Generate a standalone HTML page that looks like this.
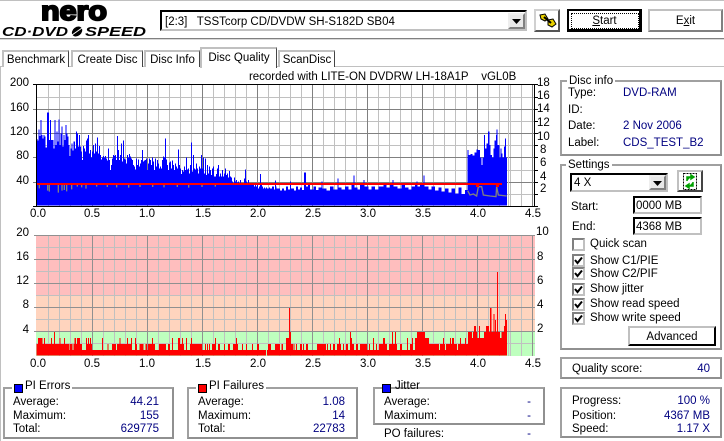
<!DOCTYPE html>
<html><head><meta charset="utf-8"><style>
html,body{margin:0;padding:0;background:#fff}
body{width:724px;height:441px;position:relative;overflow:hidden;font:11.5px "Liberation Sans",sans-serif;color:#000}
.t{position:absolute;white-space:nowrap;line-height:14px;height:14px;margin-top:1px}
.n{color:#000080}
.box{position:absolute;border:2px solid;border-color:#a0a0a0 #909090 #909090 #a0a0a0;box-sizing:border-box}
.lg{background:#fff;padding:0 2px}
.sq{position:absolute;width:7px;height:7px;border:1px solid #000;box-sizing:content-box}
.ck{position:absolute;left:572px;width:9px;height:9px;border:2px solid;border-color:#808080 #c0c0c0 #c0c0c0 #808080;background:#fff}
.ck svg{position:absolute;left:0;top:0}
.sunk{position:absolute;box-sizing:border-box;border:2px solid;border-color:#000 #c0c0c0 #c0c0c0 #000;background:#fff}
.btn{position:absolute;box-sizing:border-box;border:2px solid;border-color:#d0d0d0 #000 #000 #d0d0d0;background:#fff;text-align:center}
.tab{position:absolute;box-sizing:border-box;top:50px;height:17px;border:2px solid #c0c0c0;border-bottom:0;border-right:1px solid #444;text-align:center;line-height:17px;background:#fff}
.u{text-decoration:underline}
</style></head><body>

<div style="position:absolute;left:0;top:0;width:724px;height:1px;background:#c0c0c0"></div>
<div style="position:absolute;left:0;top:38px;width:724px;height:1px;background:#808080"></div>
<div style="position:absolute;left:0;top:39px;width:724px;height:1px;background:#d8d8d8"></div>
<div style="position:absolute;left:0;top:66px;width:724px;height:1px;background:#c0c0c0"></div>
<div style="position:absolute;left:0;top:66px;width:1px;height:375px;background:#c0c0c0"></div>

<svg style="position:absolute;left:0;top:0" width="160" height="38">
<text x="41" y="20" font-family="Liberation Sans" font-weight="bold" font-size="27" textLength="66" lengthAdjust="spacingAndGlyphs" stroke="#000" stroke-width="2">nero</text>
<text x="2" y="36" font-family="Liberation Sans" font-weight="bold" font-style="italic" font-size="12.5" textLength="66" lengthAdjust="spacingAndGlyphs">CD·DVD</text>
<ellipse cx="77" cy="31.5" rx="5" ry="5" fill="#000" transform="skewX(-15) translate(8.500,0)"/>
<path d="M72 35L82 28" stroke="#fff" stroke-width="1"/>
<text x="85" y="36" font-family="Liberation Sans" font-weight="bold" font-style="italic" font-size="12.5" textLength="61" lengthAdjust="spacingAndGlyphs">SPEED</text>
</svg>

<div class="sunk" style="left:160px;top:10px;width:367px;height:21px"></div>
<div class="t" style="left:165px;top:14px">[2:3]&nbsp;&nbsp; TSSTcorp CD/DVDW SH-S182D SB04</div>
<div class="btn" style="left:508px;top:13px;width:17px;height:16px;border-color:#eee #808080 #808080 #eee;background:#e8e8e8"></div>
<svg style="position:absolute;left:512px;top:19px" width="9" height="5"><path d="M0 0H9L4.500 5Z" fill="#000"/></svg>

<div class="btn" style="left:534px;top:9px;width:26px;height:23px;border-color:#d0d0d0 #555 #555 #d0d0d0"></div>
<svg style="position:absolute;left:538px;top:12px" width="20" height="17">
<path d="M2 3L7 2L10 7L7 9L3 7ZM10 8L15 7L18 12L14 15L10 13Z" fill="#e8d000" stroke="#000" stroke-width="1"/>
<path d="M6 5L13 11" stroke="#000" stroke-width="2"/></svg>

<div class="btn" style="left:567px;top:9px;width:75px;height:23px;border:2px solid #000;border-right-width:3px;border-bottom-width:3px"></div>
<div style="position:absolute;left:571px;top:13px;width:66px;height:14px;border:1px dotted #000"></div>
<div class="t" style="left:567px;top:13px;width:75px;text-align:center"><span class="u">S</span>tart</div>
<div class="btn" style="left:648px;top:9px;width:75px;height:23px;border-color:#c0c0c0 #808080 #808080 #c0c0c0"></div>
<div class="t" style="left:648px;top:13px;width:75px;text-align:center">E<span class="u">x</span>it</div>

<div class="tab" style="left:2px;width:67px">Benchmark</div>
<div class="tab" style="left:71px;width:72px">Create Disc</div>
<div class="tab" style="left:144px;width:56px">Disc Info</div>
<div class="tab" style="left:278px;width:57px">ScanDisc</div>
<div class="tab" style="left:200px;top:47px;width:77px;height:21px;border-bottom:0;line-height:18px;z-index:2">Disc Quality</div>

<div class="t" style="left:249px;top:69px;width:270px;letter-spacing:-.02px">recorded with LITE-ON DVDRW LH-18A1P&nbsp;&nbsp;&nbsp; vGL0B</div>

<svg style="position:absolute;left:0;top:0" width="724" height="441" shape-rendering="crispEdges">
<!-- top chart grid -->
<path d="M36 97.500H535M36 121.500H535M36 145.500H535M36 170.500H535M36 194.500H535M48.500 84V206M59.500 84V206M70.500 84V206M81.500 84V206M103.500 84V206M114.500 84V206M125.500 84V206M136.500 84V206M158.500 84V206M169.500 84V206M180.500 84V206M191.500 84V206M213.500 84V206M224.500 84V206M235.500 84V206M246.500 84V206M268.500 84V206M279.500 84V206M290.500 84V206M301.500 84V206M323.500 84V206M334.500 84V206M345.500 84V206M356.500 84V206M378.500 84V206M389.500 84V206M400.500 84V206M411.500 84V206M433.500 84V206M444.500 84V206M455.500 84V206M466.500 84V206M488.500 84V206M499.500 84V206M510.500 84V206M521.500 84V206" stroke="#c0c0c0" fill="none"/>
<path d="M33 109.500H538M33 133.500H538M33 157.500H538M33 182.500H538M92.500 84V206M147.500 84V206M202.500 84V206M257.500 84V206M312.500 84V206M367.500 84V206M422.500 84V206M477.500 84V206M532.500 84V206" stroke="#808080" fill="none"/>
<!-- top chart bars -->
<g transform="translate(0,70) scale(.33333)" fill="#0000ff">
<path d="M110 407V207H113V212H116V178H119V198H122V150H125V195H128V205H131V195H134V200H137V232H141V128H147V210H150V150H153V210H161V235H164V150H167V225H170V185H173V215H176V148H179V225H182V190H185V170H188V230H191V195H194V210H197V165H200V190H203V200H206V225H209V258H212V235H215V220H218V242H221V215H225V235H228V184H231V190H234V230H237V195H240V230H243V245H246V270H249V228H252V235H255V245H258V212H261V205H264V195H267V250H270V240H273V262H276V245H279V225H282V250H285V220H288V245H291V202H294V250H297V228H300V255H303V268H306V262H309V258H312V262H315V258H318V265H321V272H324V235H327V270H330V300H333V285H336V265H339V255H342V258H345V255H348V270H351V198H354V240H357V270H360V255H363V220H366V275H369V212H372V265H375V268H378V280H381V255H384V262H387V252H390V260H393V265H396V270H399V285H402V290H405V298H408V265H411V285H414V268H417V290H420V280H423V270H426V240H429V275H432V272H435V270H438V265H441V300H444V280H447V265H450V270H453V285H456V262H459V275H462V300H465V265H468V290H471V270H474V280H477V295H480V290H483V295H486V270H489V260H492V262H495V205H498V268H501V285H504V300H507V278H510V275H513V295H516V272H519V285H522V300H525V280H528V290H531V295H534V238H537V285H540V295H543V312H546V300H549V305H552V290H555V300H558V262H561V298H564V295H567V310H570V285H573V218H576V305H579V255H582V295H585V298H588V280H591V295H594V310H597V290H600V295H603V255H606V295H609V262H612V310H615V265H618V315H621V285H624V310H627V290H630V300H633V315H636V295H639V290H642V320H648V312H651V295H654V285H657V320H660V310H663V320H666V300H669V320H672V310H675V295H678V315H681V310H684V322H687V303H690V320H693V322H696V335H699V345H702V322H705V335H708V330H711V338H714V335H717V340H720V330H723V345H726V340H729V345H732V325H735V298H738V335H741V345H744V330H747V345H762V350H765V345H768V350H771V345H774V355H777V350H780V312H783V345H786V350H789V355H792V352H795V355H798V352H801V356H807V352H810V356H816V350H822V358H825V332H828V350H830V355H840V407Z"/>
</g>
<g transform="translate(280,70) scale(.33333)" fill="#0000ff">
<path d="M0 407V362H6V355H12V362H18V350H24V358H30V335H33V355H42V362H48V350H54V358H60V352H66V360H72V308H78V350H84V345H90V358H100V350H108V360H116V352H125V335H128V355H140V362H150V350H160V358H172V325H175V352H185V358H195V350H205V358H215V345H220V317H223V352H232V358H240V345H250V330H253V350H265V358H275V350H285V358H295V350H310V345H320V352H330V345H337V330H340V350H352V355H365V345H375V352H385V358H395V350H405V345H410V335H413V350H420V345H430V317H433V350H445V358H455V350H465V362H475V352H485V365H495V355H505V368H515V355H525V370H535V352H545V372H555V360H563V240H566V255H572V252H578V256H584V248H590V238H594V240H600V262H604V285H608V262H612V195H615V235H620V220H624V185H628V225H632V255H636V262H640V235H644V212H648V195H650V178H653V225H658V262H661V235H664V250H668V262H672V230H675V205H678V262H681V407Z"/>
</g>
<path d="M508.500 84V206" stroke="#c0c0c0"/>
<!-- jitter + speed lines -->
<g transform="translate(0,70) scale(.33333)" fill="none" shape-rendering="auto">
<path d="M118 345V355M143 345V362M148 345V365M175 345V368M186 345V362M193 345V360M200 345V364M215 345V358M232 345V350M245 345V352M258 345V356M290 345V350M322 345V351M350 345V352M386 345V353M420 345V351M458 345V351M492 345V352M532 345V351M566 345V353M606 345V351M646 345V350" stroke="#808080" stroke-width="4"/>
</g>
<g transform="translate(280,70) scale(.33333)" fill="none" shape-rendering="auto">
<path d="M563 362L570 375L580 372L590 378L595 350L605 350L610 375L630 378L648 380L650 350L655 375L680 378" stroke="#808080" stroke-width="4"/>
</g>
<rect x="37" y="183" width="465" height="2" fill="#ff0000"/>
<path d="M476 185h3v2h-3zM496 185h3v2h-3z" fill="#ff0000"/>
<path d="M36.500 84V206M36 84.500H535M36 206.500H535M534.500 84V206" stroke="#000" fill="none"/>
<path d="M33 84.500H36M33 206.500H36M535 84.500H538M535 97.500H538M535 109.500H538M535 121.500H538M535 133.500H538M535 145.500H538M535 157.500H538M535 170.500H538M535 182.500H538M535 194.500H538M535 206.500H538" stroke="#000" fill="none"/>

<!-- bottom chart -->
<rect x="36" y="235" width="499" height="60" fill="#ffbebe"/>
<rect x="36" y="295" width="499" height="37" fill="#ffd4be"/>
<rect x="36" y="332" width="499" height="24" fill="#beffbe"/>
<path d="M36 247.500H535M36 271.500H535M36 295.500H535M36 319.500H535M36 343.500H535M48.500 235V356M59.500 235V356M70.500 235V356M81.500 235V356M103.500 235V356M114.500 235V356M125.500 235V356M136.500 235V356M158.500 235V356M169.500 235V356M180.500 235V356M191.500 235V356M213.500 235V356M224.500 235V356M235.500 235V356M246.500 235V356M268.500 235V356M279.500 235V356M290.500 235V356M301.500 235V356M323.500 235V356M334.500 235V356M345.500 235V356M356.500 235V356M378.500 235V356M389.500 235V356M400.500 235V356M411.500 235V356M433.500 235V356M444.500 235V356M455.500 235V356M466.500 235V356M488.500 235V356M499.500 235V356M508.500 235V356M510.500 235V356M521.500 235V356" stroke="#c0c0c0" fill="none"/>
<path d="M34 235.500H535M34 259.500H535M34 283.500H535M34 307.500H535M34 331.500H535M92.500 235V356M147.500 235V356M202.500 235V356M257.500 235V356M312.500 235V356M367.500 235V356M422.500 235V356M477.500 235V356M532.500 235V356" stroke="#909090" fill="none"/>
<g transform="translate(0,225) scale(.33333)" fill="#ff0000">
<path d="M110 392V357H114V339H127V357H132V339H135V357H153V339H156V357H162V321H165V357H178V339H181V357H192V339H195V357H207V375H209V357H218V375H220V357H224V339H228V357H231V339H240V357H246V375H258V339H261V357H264V339H267V357H270V339H273V357H276V375H306V339H309V375H322V357H325V375H336V357H348V375H351V357H358V339H361V357H381V339H384V357H393V339H396V375H405V339H408V357H411V375H418V357H430V375H436V357H441V375H444V357H456V339H459V357H465V375H477V357H498V375H504V357H510V375H516V339H519V375H534V339H540V357H546V339H549V357H552V375H558V339H561V375H570V357H573V339H576V357H606V375H615V357H618V375H621V357H624V375H627V357H630V375H636V357H645V339H648V375H654V357H660V375H672V357H675V375H684V357H690V375H699V357H708V339H711V357H714V375H726V357H729V375H738V357H741V375H756V357H759V375H771V357H777V375H798V392H801V375H804V357H813V375H825V357H840V392Z"/>
</g>
<g transform="translate(280,225) scale(.33333)" fill="#ff0000">
<path d="M0 392V375H5V357H9V375H18V339H27V249H30V321H33V357H39V375H40V357H44V375H48V357H51V375H60V357H66V375H69V357H72V375H78V357H84V375H111V357H138V375H141V357H144V375H150V357H153V375H159V357H165V375H171V357H177V339H180V357H183V375H189V357H192V375H198V357H204V375H210V321H213V339H216V357H222V375H228V357H234V375H240V357H261V375H267V357H270V375H279V339H282V375H288V357H291V375H297V357H309V339H315V357H321V375H327V357H336V321H339V357H345V321H348V357H351V375H360V357H366V375H381V339H384V375H390V357H396V339H399V375H405V339H411V321H435V339H441V339H447V357H477V375H480V357H489V339H492V357H495V375H498V357H510V339H513V357H516V339H522V357H531V375H534V357H540V339H543V357H555V339H558V357H564V321H576V339H579V321H582V303H588V321H591V339H597V303H600V339H612V321H618V303H627V321H630V249H634V321H640V267H643V321H645V285H648V321H651V141H654V321H660V339H664V321H672V303H675V267H678V285H681V392Z"/>
</g>
</svg>

<!-- axis labels -->
<div class="t" style="right:695px;top:75px">200</div>
<div class="t" style="right:695px;top:100px">160</div>
<div class="t" style="right:695px;top:124px">120</div>
<div class="t" style="right:695px;top:148px">80</div>
<div class="t" style="right:695px;top:173px">40</div>
<div class="t" style="left:537px;top:75px">18</div>
<div class="t" style="left:537px;top:88px">16</div>
<div class="t" style="left:537px;top:101px">14</div>
<div class="t" style="left:537px;top:115px">12</div>
<div class="t" style="left:537px;top:129px">10</div>
<div class="t" style="left:540px;top:142px">8</div>
<div class="t" style="left:540px;top:155px">6</div>
<div class="t" style="left:540px;top:169px">4</div>
<div class="t" style="left:540px;top:181px">2</div>
<div class="t" style="left:30px;width:16px;text-align:center;top:206px">0.0</div>
<div class="t" style="left:84px;width:16px;text-align:center;top:206px">0.5</div>
<div class="t" style="left:139px;width:16px;text-align:center;top:206px">1.0</div>
<div class="t" style="left:195px;width:16px;text-align:center;top:206px">1.5</div>
<div class="t" style="left:250px;width:16px;text-align:center;top:206px">2.0</div>
<div class="t" style="left:305px;width:16px;text-align:center;top:206px">2.5</div>
<div class="t" style="left:360px;width:16px;text-align:center;top:206px">3.0</div>
<div class="t" style="left:415px;width:16px;text-align:center;top:206px">3.5</div>
<div class="t" style="left:470px;width:16px;text-align:center;top:206px">4.0</div>
<div class="t" style="left:525px;width:16px;text-align:center;top:206px">4.5</div>

<div class="t" style="right:695px;top:225px">20</div>
<div class="t" style="right:695px;top:249px">16</div>
<div class="t" style="right:695px;top:273px">12</div>
<div class="t" style="right:695px;top:297px">8</div>
<div class="t" style="right:695px;top:322px">4</div>
<div class="t" style="left:536px;top:224px">10</div>
<div class="t" style="left:537px;top:249px">8</div>
<div class="t" style="left:537px;top:273px">6</div>
<div class="t" style="left:537px;top:297px">4</div>
<div class="t" style="left:537px;top:321px">2</div>
<div class="t" style="left:30px;width:16px;text-align:center;top:356px">0.0</div>
<div class="t" style="left:84px;width:16px;text-align:center;top:356px">0.5</div>
<div class="t" style="left:139px;width:16px;text-align:center;top:356px">1.0</div>
<div class="t" style="left:195px;width:16px;text-align:center;top:356px">1.5</div>
<div class="t" style="left:250px;width:16px;text-align:center;top:356px">2.0</div>
<div class="t" style="left:305px;width:16px;text-align:center;top:356px">2.5</div>
<div class="t" style="left:360px;width:16px;text-align:center;top:356px">3.0</div>
<div class="t" style="left:415px;width:16px;text-align:center;top:356px">3.5</div>
<div class="t" style="left:470px;width:16px;text-align:center;top:356px">4.0</div>
<div class="t" style="left:525px;width:16px;text-align:center;top:356px">4.5</div>

<!-- Disc info -->
<div class="box" style="left:560px;top:80px;width:162px;height:76px"></div>
<div class="t lg" style="left:567px;top:73px">Disc info</div>
<div class="t" style="left:568px;top:85px">Type:</div><div class="t n" style="left:623px;top:85px">DVD-RAM</div>
<div class="t" style="left:568px;top:102px">ID:</div>
<div class="t" style="left:568px;top:118px">Date:</div><div class="t n" style="left:623px;top:118px">2 Nov 2006</div>
<div class="t" style="left:568px;top:135px">Label:</div><div class="t n" style="left:623px;top:135px">CDS_TEST_B2</div>

<!-- Settings -->
<div class="box" style="left:560px;top:164px;width:162px;height:186px"></div>
<div class="t lg" style="left:566px;top:157px">Settings</div>
<div class="sunk" style="left:570px;top:173px;width:98px;height:19px"></div>
<div class="t" style="left:574px;top:175px">4 X</div>
<div class="btn" style="left:649px;top:175px;width:17px;height:15px;border-color:#eee #808080 #808080 #eee;background:#e8e8e8"></div>
<svg style="position:absolute;left:653px;top:181px" width="9" height="5"><path d="M0 0H9L4.500 5Z" fill="#000"/></svg>
<div class="btn" style="left:677px;top:170px;width:26px;height:22px;border:2px solid;border-color:#c0c0c0 #444 #444 #c0c0c0"></div>
<svg style="position:absolute;left:683px;top:173px" width="14" height="17">
<rect x=".5" y=".5" width="13" height="16" fill="#fff" stroke="#000" stroke-dasharray="2 1"/>
<path d="M4 8V4H8M8 2L11 4L8 6Z" stroke="#00a000" stroke-width="1.500" fill="#00a000"/>
<path d="M10 9V13H6M6 11L3 13L6 15Z" stroke="#00a000" stroke-width="1.500" fill="#00a000"/></svg>

<div class="t" style="left:571px;top:199px">Start:</div>
<div class="sunk" style="left:633px;top:196px;width:69px;height:18px"></div>
<div class="t" style="left:636px;top:198px">0000 MB</div>
<div class="t" style="left:572px;top:219px">End:</div>
<div class="sunk" style="left:633px;top:217px;width:69px;height:18px"></div>
<div class="t" style="left:636px;top:219px">4368 MB</div>

<div class="ck" style="top:238px"></div>
<div class="t" style="left:590px;top:236px">Quick scan</div>
<div class="ck" style="top:254px"><svg width="9" height="9"><path d="M1 4L3.500 7L8 1.500" stroke="#000" stroke-width="2" fill="none"/></svg></div>
<div class="t" style="left:590px;top:253px">Show C1/PIE</div>
<div class="ck" style="top:267px"><svg width="9" height="9"><path d="M1 4L3.500 7L8 1.500" stroke="#000" stroke-width="2" fill="none"/></svg></div>
<div class="t" style="left:590px;top:266px">Show C2/PIF</div>
<div class="ck" style="top:283px"><svg width="9" height="9"><path d="M1 4L3.500 7L8 1.500" stroke="#000" stroke-width="2" fill="none"/></svg></div>
<div class="t" style="left:590px;top:281px">Show jitter</div>
<div class="ck" style="top:298px"><svg width="9" height="9"><path d="M1 4L3.500 7L8 1.500" stroke="#000" stroke-width="2" fill="none"/></svg></div>
<div class="t" style="left:590px;top:296px">Show read speed</div>
<div class="ck" style="top:312px"><svg width="9" height="9"><path d="M1 4L3.500 7L8 1.500" stroke="#000" stroke-width="2" fill="none"/></svg></div>
<div class="t" style="left:590px;top:310px">Show write speed</div>
<div class="btn" style="left:628px;top:326px;width:88px;height:20px;border-color:#c0c0c0 #000 #000 #c0c0c0"></div>
<div class="t" style="left:628px;top:329px;width:88px;text-align:center">Advanced</div>

<div class="box" style="left:560px;top:357px;width:162px;height:22px"></div>
<div class="t" style="left:572px;top:361px">Quality score:</div>
<div class="t n" style="right:14px;top:361px">40</div>

<div class="box" style="left:560px;top:387px;width:162px;height:51px"></div>
<div class="t" style="left:572px;top:393px">Progress:</div><div class="t n" style="right:14px;top:393px">100 %</div>
<div class="t" style="left:572px;top:408px">Position:</div><div class="t n" style="right:14px;top:408px">4367 MB</div>
<div class="t" style="left:572px;top:421px">Speed:</div><div class="t n" style="right:14px;top:421px">1.17 X</div>

<!-- bottom groups -->
<div class="box" style="left:3px;top:387px;width:171px;height:52px"></div>
<div class="t lg" style="left:12px;top:378px;padding-left:13px">PI Errors</div>
<div class="sq" style="left:14px;top:384px;background:#0000ff"></div>
<div class="t" style="left:13px;top:394px">Average:</div><div class="t n" style="right:565px;top:394px">44.21</div>
<div class="t" style="left:13px;top:408px">Maximum:</div><div class="t n" style="right:565px;top:408px">155</div>
<div class="t" style="left:13px;top:421px">Total:</div><div class="t n" style="right:565px;top:421px">629775</div>

<div class="box" style="left:187px;top:387px;width:171px;height:52px"></div>
<div class="t lg" style="left:196px;top:378px;padding-left:13px">PI Failures</div>
<div class="sq" style="left:198px;top:384px;background:#ff0000"></div>
<div class="t" style="left:198px;top:394px">Average:</div><div class="t n" style="right:379px;top:394px">1.08</div>
<div class="t" style="left:198px;top:408px">Maximum:</div><div class="t n" style="right:379px;top:408px">14</div>
<div class="t" style="left:198px;top:421px">Total:</div><div class="t n" style="right:379px;top:421px">22783</div>

<div class="box" style="left:373px;top:387px;width:172px;height:38px"></div>
<div class="t" style="left:395px;top:378px">Jitter</div>
<div class="sq" style="left:382px;top:384px;background:#0000ff"></div>
<div class="t" style="left:384px;top:394px">Average:</div><div class="t n" style="right:193px;top:394px">-</div>
<div class="t" style="left:384px;top:408px">Maximum:</div><div class="t n" style="right:193px;top:408px">-</div>
<div class="t" style="left:384px;top:426px">PO failures:</div><div class="t n" style="right:193px;top:426px">-</div>

</body></html>
